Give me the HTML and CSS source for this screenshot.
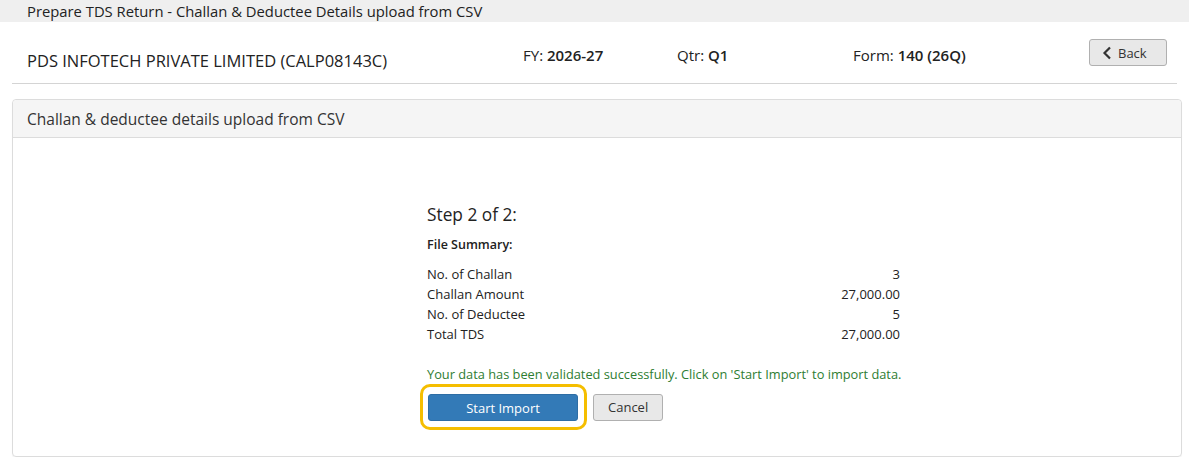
FILE: index.html
```html
<!DOCTYPE html>
<html lang="en">
<head>
  <meta charset="UTF-8">
  <meta name="viewport" content="width=device-width, initial-scale=1.0">
  <title>Prepare TDS Return</title>
  <link rel="stylesheet" href="styles.css">
</head>
<body>
  <div class="page-title">Prepare TDS Return - Challan &amp; Deductee Details upload from CSV</div>

  <div class="return-header">
    <div class="deductor">PDS INFOTECH PRIVATE LIMITED (CALP08143C)</div>
    <div class="meta meta-fy">FY: <b>2026-27</b></div>
    <div class="meta meta-qtr">Qtr: <b>Q1</b></div>
    <div class="meta meta-form">Form: <b>140 (26Q)</b></div>
    <button class="btn btn-default btn-back">
      <svg width="10" height="14" viewBox="0 0 10 14"><path d="M8 1.5 2.5 7 8 12.5" fill="none" stroke="#333" stroke-width="2.2"/></svg>
      Back
    </button>
  </div>

  <div class="panel">
    <div class="panel-heading">Challan &amp; deductee details upload from CSV</div>
    <div class="panel-body">
      <div class="import-box">
        <h3>Step 2 of 2:</h3>
        <h4>File Summary:</h4>
        <table class="summary">
          <tr><td>No. of Challan</td><td>3</td></tr>
          <tr><td>Challan Amount</td><td>27,000.00</td></tr>
          <tr><td>No. of Deductee</td><td>5</td></tr>
          <tr><td>Total TDS</td><td>27,000.00</td></tr>
        </table>
        <p class="success-msg">Your data has been validated successfully. Click on 'Start Import' to import data.</p>
        <div class="actions">
          <span class="highlight"><button class="btn btn-primary">Start Import</button></span>
          <button class="btn btn-default btn-cancel">Cancel</button>
        </div>
      </div>
    </div>
  </div>
</body>
</html>
```
FILE: styles.css
```css
* {
  box-sizing: border-box;
  margin: 0;
  padding: 0;
}

body {
  font-family: "Open Sans", Arial, sans-serif;
  font-size: 13px;
  color: #222;
  background: #fff;
}

.page-title {
  background: #efefef;
  height: 22px;
  line-height: 22px;
  padding-left: 27px;
  font-size: 14.8px;
}

.return-header {
  display: flex;
  align-items: center;
  height: 62px;
  margin: 0 12px;
  padding: 0 11px 0 15px;
  border-bottom: 1px solid #d4d4d4;
  font-size: 15px;
}

.deductor {
  width: 496px;
  font-size: 16.5px;
  padding-top: 15px;
}

.meta {
  padding-top: 4px;
}

.meta b {
  font-weight: 600;
}

.meta-fy { width: 154px; }
.meta-qtr { width: 176px; }
.meta-form { flex: 1; }

.btn {
  font-family: inherit;
  font-size: 13px;
  border-radius: 3px;
  cursor: pointer;
  height: 27px;
  padding: 0 14px;
}

.btn-default {
  background: #e8e8e8;
  border: 1px solid #b0b0b0;
  color: #333;
}

.btn-back {
  display: flex;
  align-items: center;
  gap: 6px;
  width: 78px;
  padding: 0 12px;
  margin-left: 1px;
  margin-right: -1px;
}

.btn-primary {
  background: #337ab7;
  border: 1px solid #2e6da4;
  color: #fff;
  width: 150px;
}

.btn-cancel {
  width: 70px;
  margin-left: 6px;
}

.panel {
  margin: 15px 7px 0 12px;
  border: 1px solid #dcdcdc;
  border-radius: 4px;
  height: 358px;
  box-shadow: 0 1px 1px rgba(0, 0, 0, 0.06);
}

.panel-heading {
  background: #f5f5f5;
  border-bottom: 1px solid #dcdcdc;
  height: 38px;
  line-height: 38px;
  padding-left: 14px;
  font-size: 15.5px;
  color: #333;
  border-radius: 4px 4px 0 0;
}

.import-box {
  width: 473px;
  margin: 65px 0 0 414px;
}

.import-box h3 {
  font-size: 17.3px;
  font-weight: normal;
  line-height: 24px;
}

.import-box h4 {
  font-size: 12.5px;
  font-weight: 600;
  margin-top: 8px;
  line-height: 20px;
}

.summary {
  width: 100%;
  border-collapse: collapse;
  margin-top: 9px;
}

.summary td {
  height: 20px;
  padding: 0;
}

.summary td:last-child {
  text-align: right;
}

.success-msg {
  color: #2e7d32;
  margin-top: 20px;
  line-height: 20px;
  font-size: 12.8px;
  white-space: nowrap;
}

.actions {
  display: flex;
  align-items: center;
  margin-left: -7px;
}

.highlight {
  display: inline-block;
  border: 3px solid #f5be00;
  border-radius: 10px;
  padding: 7px 6px 6px 5px;
}

.highlight .btn {
  display: block;
}
```
